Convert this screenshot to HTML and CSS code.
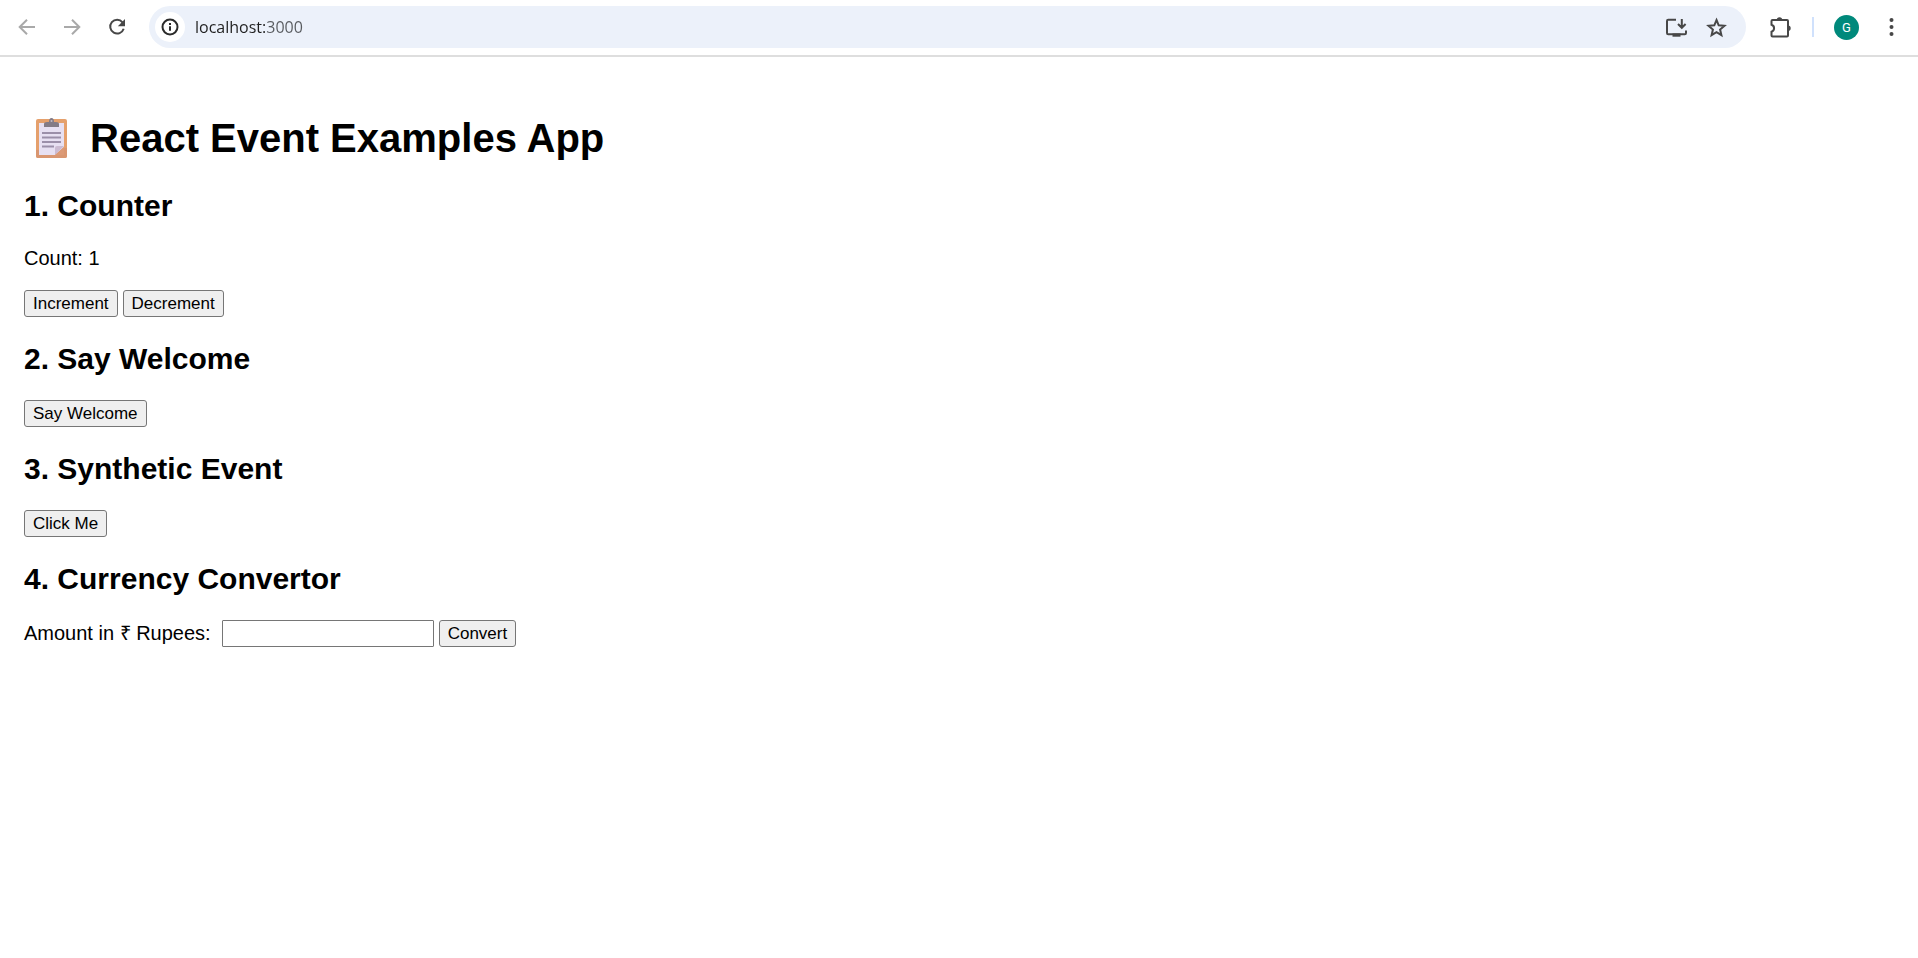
FILE: index.html
```html
<!DOCTYPE html>
<html lang="en">
<head>
<meta charset="utf-8">
<title>React Event Examples App</title>
<link rel="stylesheet" href="styles.css">
</head>
<body>
<header class="toolbar">
  <nav class="nav-buttons" aria-label="Navigation">
    <button class="nav-button muted" type="button" aria-label="Back">
      <svg class="icon" viewBox="0 0 24 24"><path d="M20 12H5M12 4.700L4.700 12l7.300 7.300"/></svg>
    </button>
    <button class="nav-button muted" type="button" aria-label="Forward">
      <svg class="icon" viewBox="0 0 24 24"><path d="M4 12h15M12 4.700l7.300 7.300-7.300 7.300"/></svg>
    </button>
    <button class="nav-button" type="button" aria-label="Reload">
      <svg class="icon" viewBox="0 0 24 24"><path d="M17.500 7.300A6.900 6.900 0 1 0 18.700 13.800"/><path class="solid" d="M20 4v7.200h-7.200z"/></svg>
    </button>
  </nav>
  <div class="omnibox">
    <button class="site-info" type="button" aria-label="Site information">
      <svg class="icon" viewBox="0 0 24 24"><circle cx="12" cy="12" r="7.500"/><path d="M12 11.200v4.600M12 8v1.900"/></svg>
    </button>
    <input class="address" type="text" value="localhost:3000" aria-label="Address">
    <div class="omnibox-actions">
      <button type="button" aria-label="Install app">
        <svg class="icon" viewBox="0 0 24 24"><path d="M12 4.800H4.200q-1.200 0-1.200 1.200v12q0 1.200 1.200 1.200h16.600q1.200 0 1.200-1.200V15.500M17.800 4v8.500M14 9l3.800 3.800 3.800-3.800"/><path class="solid" d="M8.500 18.500h8v3.200h-8z"/></svg>
      </button>
      <button type="button" aria-label="Bookmark">
        <svg class="icon" viewBox="0 0 24 24"><path d="M12.500 5l2.200 5.300 5.800.5-4.400 3.800 1.300 5.600-4.900-3-4.900 3 1.300-5.600-4.400-3.800 5.800-.5z"/></svg>
      </button>
    </div>
  </div>
  <button class="extensions" type="button" aria-label="Extensions">
    <svg class="icon" viewBox="0 0 26 26"><path d="M6.500 6H21q1 0 1 1V21.500q0 1-1 1H6.500q-1 0-1-1v-3.800a3.600 3.600 0 0 0 0-6.900V7q0-1 1-1z"/><path class="solid" d="M10.800 6a2.700 2.700 0 0 1 5.400 0zM22 11.500a2.700 2.700 0 0 1 0 5.400z"/></svg>
  </button>
  <span class="divider"></span>
  <button class="avatar" type="button" aria-label="Profile">G</button>
  <button class="menu" type="button" aria-label="Menu">
    <svg class="icon" viewBox="0 0 24 24"><circle class="solid" cx="12.500" cy="5" r="2"/><circle class="solid" cx="12.500" cy="12" r="2"/><circle class="solid" cx="12.500" cy="19" r="2"/></svg>
  </button>
</header>
<main class="app">
  <h1 class="title">
    <svg class="clipboard" viewBox="0 0 32 40" aria-hidden="true">
      <rect x="0" y="1" width="31" height="39" rx="2" fill="#e5a06c"/>
      <path d="M0 32v6q0 2 2 2h27q2 0 2-2V30z" fill="#d99670"/>
      <path d="M3 5h25v24l-9 8H3z" fill="#e7e0f2"/>
      <path d="M28 28l-9 9v-7q0-2 2-2z" fill="#cbbbd2"/>
      <path d="M28 29v8h-9z" fill="#dc9a76"/>
      <path d="M8 9V6q0-2 3-2h2q0-4 2.500-4T18 4h2q3 0 3 2v3z" fill="#837b86"/>
      <circle cx="15.500" cy="3" r="1" fill="#c3bac4"/>
      <path d="M6 15h19M6 19.500h19M6 24h19M6 28.500h12" stroke="#9b8fa9" stroke-width="2"/>
    </svg>
    <span>React Event Examples App</span>
  </h1>
  <section>
    <h2 class="heading">1. Counter</h2>
    <p class="count">Count: 1</p>
    <div class="row">
      <button class="button" type="button">Increment</button>
      <button class="button" type="button">Decrement</button>
    </div>
  </section>
  <section>
    <h2 class="heading">2. Say Welcome</h2>
    <div class="row"><button class="button" type="button">Say Welcome</button></div>
  </section>
  <section>
    <h2 class="heading">3. Synthetic Event</h2>
    <div class="row"><button class="button" type="button">Click Me</button></div>
  </section>
  <section>
    <h2 class="heading">4. Currency Convertor</h2>
    <form class="row">
      <label class="amount-label" for="amount">Amount in ₹ Rupees:</label>
      <input class="amount" id="amount" type="text">
      <button class="button" type="button">Convert</button>
    </form>
  </section>
</main>
</body>
</html>
```
FILE: styles.css
```css
* {
  box-sizing: border-box;
}

body {
  margin: 0;
  background: #fff;
  color: #000;
  font-family: Arial, "Liberation Sans", sans-serif;
  font-size: 20px;
}

.toolbar {
  display: flex;
  align-items: center;
  gap: 20px;
  padding: 6px 15px 7px 4px;
  border-bottom: 2px solid #dedede;
  background: #fff;
}

.toolbar button {
  display: flex;
  align-items: center;
  justify-content: center;
  padding: 0;
  border: 0;
  background: none;
  color: #474747;
}

.icon {
  width: 24px;
  height: 24px;
  fill: none;
  stroke: currentColor;
  stroke-width: 2;
}

.icon .solid {
  fill: currentColor;
  stroke: none;
}

.nav-buttons {
  display: flex;
  margin-right: -10px;
}

.toolbar .nav-button {
  width: 45px;
  height: 42px;
}

.toolbar .muted {
  color: #a9a9a9;
}

.omnibox {
  display: flex;
  flex: 1;
  align-items: center;
  gap: 10px;
  height: 42px;
  padding: 0 18px 0 6px;
  border-radius: 21px;
  background: #ecf1fa;
}

.toolbar .site-info {
  width: 30px;
  height: 30px;
  border-radius: 50%;
  background: #fff;
  color: #2a2a2a;
}

.address {
  flex: 1;
  min-width: 0;
  padding: 0;
  border: 0;
  outline: 0;
  background: linear-gradient(to right, #1f1f1f 71px, #575a5e 71px) text;
  color: transparent;
  font-family: "Segoe UI", "Open Sans", sans-serif;
  font-size: 16px;
  line-height: 24px;
}

.omnibox-actions {
  display: flex;
  gap: 16px;
}

.extensions .icon {
  width: 26px;
  height: 26px;
}

.divider {
  width: 2px;
  height: 20px;
  background: #d0e1fc;
}

.toolbar .avatar {
  width: 25px;
  height: 25px;
  border-radius: 50%;
  background: #00897b;
  color: #fff;
  font-family: Roboto, sans-serif;
  font-size: 13px;
}

.app {
  padding: 58px 24px 24px;
}

.title {
  display: flex;
  align-items: center;
  gap: 22px;
  margin: 0 0 28px;
  padding-left: 12px;
  font-size: 40px;
  line-height: 46px;
}

.clipboard {
  width: 32px;
  height: 40px;
}

.heading {
  margin: 25px 0;
  font-size: 30px;
  line-height: 33px;
}

.count {
  margin: 0 0 20px;
  line-height: 23px;
}

.row {
  display: flex;
  align-items: center;
  gap: 5px;
}

.button {
  height: 27px;
  padding: 0 8px;
  border: 1px solid #767676;
  border-radius: 3px;
  background: #efefef;
  color: #000;
  font-family: inherit;
  font-size: 17px;
  line-height: 20px;
}

.amount-label {
  margin-right: 6px;
  line-height: 23px;
}

.amount {
  width: 212px;
  height: 27px;
  padding: 1px 2px;
  border: 1px solid #767676;
  border-radius: 1px;
  background: #fff;
  font-family: inherit;
  font-size: 17px;
}
```
